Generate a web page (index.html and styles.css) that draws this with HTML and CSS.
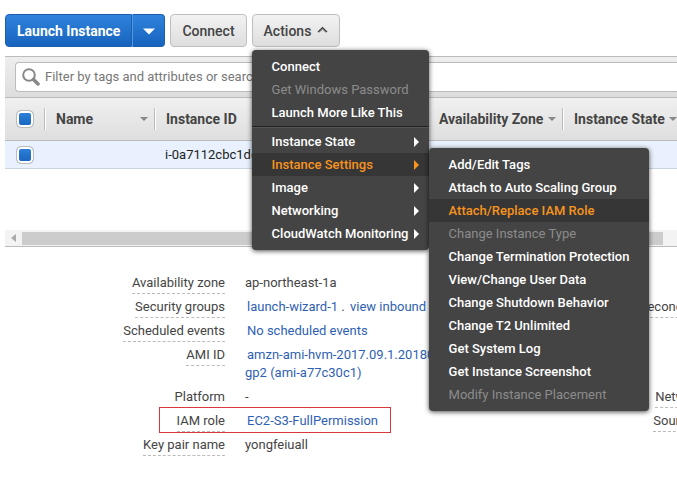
FILE: index.html
```html
<!DOCTYPE html>
<html lang="en">
<head>
<meta charset="utf-8">
<title>EC2 Instances</title>
<link rel="stylesheet" href="styles.css">
</head>
<body>
<header class="toolbar">
  <div class="split">
    <button class="btn primary launch" type="button">Launch Instance</button>
    <button class="btn primary more" type="button" aria-label="More launch options"><svg width="12" height="7" viewBox="0 0 12 7"><path d="M0 0.500h12L6 6.500z" fill="#fff"/></svg></button>
  </div>
  <button class="btn" type="button">Connect</button>
  <div class="dropdown">
    <button class="btn" type="button" aria-expanded="true">Actions <svg class="caret" width="11" height="8" viewBox="0 0 11 8"><path d="M1 6L5.500 1L10 6L8.500 6.500L5.500 4L2.500 6.500z" fill="#999"/><path d="M1 6L5.500 1.500L10 6" fill="none" stroke="#444" stroke-width="1.200"/></svg></button>
    <div class="menu actions-menu">
      <ul>
        <li><button type="button">Connect</button></li>
        <li><button type="button" disabled>Get Windows Password</button></li>
        <li><button type="button">Launch More Like This</button></li>
      </ul>
      <ul class="group">
        <li><button class="parent" type="button">Instance State</button></li>
        <li class="has-submenu"><button class="parent active" type="button">Instance Settings</button>
          <ul class="menu submenu">
            <li><button type="button">Add/Edit Tags</button></li>
            <li><button type="button">Attach to Auto Scaling Group</button></li>
            <li><button class="active" type="button">Attach/Replace IAM Role</button></li>
            <li><button type="button" disabled>Change Instance Type</button></li>
            <li><button type="button">Change Termination Protection</button></li>
            <li><button type="button">View/Change User Data</button></li>
            <li><button type="button">Change Shutdown Behavior</button></li>
            <li><button type="button">Change T2 Unlimited</button></li>
            <li><button type="button">Get System Log</button></li>
            <li><button type="button">Get Instance Screenshot</button></li>
            <li><button type="button" disabled>Modify Instance Placement</button></li>
          </ul>
        </li>
        <li><button class="parent" type="button">Image</button></li>
        <li><button class="parent" type="button">Networking</button></li>
        <li><button class="parent" type="button">CloudWatch Monitoring</button></li>
      </ul>
    </div>
  </div>
</header>
<main>
  <div class="filter">
    <label class="search">
      <svg width="18" height="18" viewBox="0 0 18 18" fill="none" stroke="#888"><circle cx="7" cy="7" r="5.800" stroke-width="2"/><path d="M11.500 11.500L16 16" stroke-width="3.500" stroke-linecap="round"/></svg>
      <input type="text" placeholder="Filter by tags and attributes or search by keyword" aria-label="Filter instances">
    </label>
  </div>
  <div class="grid">
    <table>
      <colgroup><col class="c-check"><col class="c-name"><col class="c-id"><col class="c-type"><col class="c-zone"><col class="c-state"></colgroup>
      <thead>
        <tr>
          <th><input type="checkbox" checked aria-label="Select all"></th>
          <th><div class="head">Name<i class="sort"></i></div></th>
          <th><div class="head">Instance ID<i class="sort"></i></div></th>
          <th></th>
          <th><div class="head">Availability Zone<i class="sort"></i></div></th>
          <th><div class="head">Instance State<i class="sort"></i></div></th>
        </tr>
      </thead>
      <tbody>
        <tr>
          <td><input type="checkbox" checked aria-label="Select instance"></td>
          <td></td>
          <td>i-0a7112cbc1dd</td>
          <td></td>
          <td></td>
          <td><span class="status"></span></td>
        </tr>
      </tbody>
    </table>
    <div class="scrollbar"><i class="arrow"></i><div class="thumb"></div></div>
  </div>
  <section class="details">
    <dl>
      <div class="row"><dt><span>Availability zone</span></dt><dd>ap-northeast-1a</dd></div>
      <div class="row"><dt><span>Security groups</span></dt><dd><a href="#">launch-wizard-1</a> . <a href="#">view inbound</a></dd></div>
      <div class="row"><dt><span>Scheduled events</span></dt><dd><a href="#">No scheduled events</a></dd></div>
      <div class="row ami"><dt><span>AMI ID</span></dt><dd><a href="#">amzn-ami-hvm-2017.09.1.20180</a><br>
        <a class="wrapped" href="#">gp2 (ami-a77c30c1)</a></dd></div>
      <div class="row"><dt><span>Platform</span></dt><dd>-</dd></div>
      <div class="row marked"><dt><span>IAM role</span></dt><dd><a href="#">EC2-S3-FullPermission</a></dd></div>
      <div class="row"><dt><span>Key pair name</span></dt><dd>yongfeiuall</dd></div>
    </dl>
    <dl class="second">
      <div class="row"></div>
      <div class="row"><dt><span>Secondary private IPs</span></dt></div>
      <div class="row"></div>
      <div class="row ami"></div>
      <div class="row"><dt><span>Network interfaces</span></dt></div>
      <div class="row"><dt><span>Source/dest. check</span></dt></div>
    </dl>
  </section>
</main>
</body>
</html>
```
FILE: styles.css
```css
* { box-sizing: border-box; }
body {
  margin: 0;
  min-height: 100vh;
  overflow: hidden;
  background: #fff;
  color: #444;
  font: 13px/18px Roboto, "Liberation Sans", sans-serif;
}
main { overflow: hidden; }
ul, dl, dd { margin: 0; padding: 0; list-style: none; }
button, input { font: inherit; color: inherit; }
a { color: #2f5fb3; text-decoration: none; }

.toolbar { display: flex; gap: 5px; padding: 14px 5px 9px; }
.split { display: flex; }
.btn {
  height: 33px;
  padding: 0 11px;
  border: 1px solid #bfbfbf;
  border-radius: 4px;
  background: linear-gradient(#f2f2f2, #dedede);
  font-size: 14px;
  font-weight: 500;
  white-space: nowrap;
}
.primary {
  border-color: #1c5fb0;
  background: linear-gradient(#2f83dc, #1763bd);
  color: #fff;
  font-weight: 700;
}
.launch { padding: 0 11px; border-radius: 4px 0 0 4px; }
.more {
  width: 33px;
  padding: 0;
  border-left: 1px solid #4f9ae6;
  border-radius: 0 4px 4px 0;
}
.more svg { vertical-align: middle; }
.caret { margin-left: 2px; vertical-align: 2px; }

.dropdown { position: relative; }
.menu {
  position: absolute;
  z-index: 2;
  padding: 5px 0;
  border-radius: 4px;
  background: #444;
  box-shadow: 0 1px 5px rgba(0, 0, 0, .7);
  color: #fff;
}
.actions-menu { top: 36px; left: 0; width: 177px; }
.menu button {
  position: relative;
  display: block;
  width: 100%;
  height: 23px;
  padding: 0 20px;
  border: 0;
  background: none;
  font-weight: 500;
  text-align: left;
  white-space: nowrap;
}
.menu button:disabled { color: #8c8c8c; font-weight: 400; }
.menu .active { background: #363636; color: #f7931e; }
.group {
  margin-top: 2px;
  padding-top: 3px;
  border-top: 1px solid #222;
  box-shadow: inset 0 1px #555;
}
.parent::after {
  content: "";
  position: absolute;
  top: 7px;
  right: 10px;
  border: 5px solid transparent;
  border-left-color: currentColor;
  border-right: 0;
}
.has-submenu { position: relative; }
.submenu { top: -5px; left: 100%; width: 220px; }

.filter {
  margin-left: 5px;
  padding: 5px 0 5px 10px;
  border-top: 1px solid #bbb;
  border-bottom: 1px solid #bbb;
  background: linear-gradient(#eee, #ddd);
}
.search {
  display: flex;
  align-items: center;
  gap: 5px;
  height: 30px;
  padding-left: 6px;
  border: 1px solid #bbb;
  border-right: 0;
  border-radius: 4px 0 0 4px;
  background: #fff;
}
.search input {
  flex: 1;
  min-width: 0;
  padding: 0;
  border: 0;
  outline: 0;
  background: none;
}
.search input::placeholder { color: #777; opacity: 1; }

.grid {
  display: flex;
  flex-direction: column;
  height: 149px;
  margin-left: 5px;
  border-bottom: 1px solid #bbb;
  overflow: hidden;
}
table { width: 678px; table-layout: fixed; border-spacing: 0; }
.c-check { width: 39px; }
.c-name { width: 110px; }
.c-id { width: 135px; }
.c-type { width: 138px; }
.c-zone { width: 135px; }
th {
  height: 43px;
  padding: 0;
  border-bottom: 1px solid #bbb;
  background: linear-gradient(#f0f0f0, #dedede);
  font-size: 14px;
  font-weight: 700;
  text-align: left;
}
.head {
  display: flex;
  align-items: center;
  justify-content: space-between;
  height: 22px;
  padding: 0 6px 0 11px;
  border-left: 1px solid #bbb;
  box-shadow: inset 1px 0 #fff;
  white-space: nowrap;
}
.sort { border: 4px solid transparent; border-top-color: #888; border-bottom: 0; }
td {
  height: 28px;
  padding: 0 0 0 11px;
  border-bottom: 1px solid #ccd4df;
  background: #e8f1fd;
  color: #222;
}
th:first-child, td:first-child { padding-left: 11px; }
input[type="checkbox"] {
  display: block;
  appearance: none;
  width: 18px;
  height: 18px;
  margin: 0;
  border: 1px solid #bbb;
  border-radius: 5px;
  background: linear-gradient(#2f83dc, #1763bd);
  box-shadow: inset 0 0 0 2px #fff;
}
.status { display: block; width: 14px; height: 14px; border-radius: 50%; background: #4a6b45; }
.scrollbar { display: flex; align-items: center; height: 16px; margin-top: auto; background: #f3f3f3; }
.arrow { margin: 0 6px; border: 4px solid transparent; border-right: 5px solid #aaa; border-left: 0; }
.thumb { width: 641px; height: 13px; background: #ccc; }

.details { display: flex; margin-top: 27px; }
.details dl { flex: none; width: 540px; }
.row { position: relative; display: flex; height: 24px; gap: 20px; }
.ami { height: 42px; }
dt { flex: none; width: 225px; text-align: right; }
dt span { display: inline-block; height: 20px; border-bottom: 1px dashed #bbb; }
dd { white-space: nowrap; }
dd a { margin-left: 2px; }
dd .wrapped { margin-left: 0; }
.details .second { width: 240px; }
.marked::after {
  content: "";
  position: absolute;
  top: -5px;
  left: 159px;
  width: 230px;
  height: 24px;
  border: 1px solid #d9363e;
}
```
